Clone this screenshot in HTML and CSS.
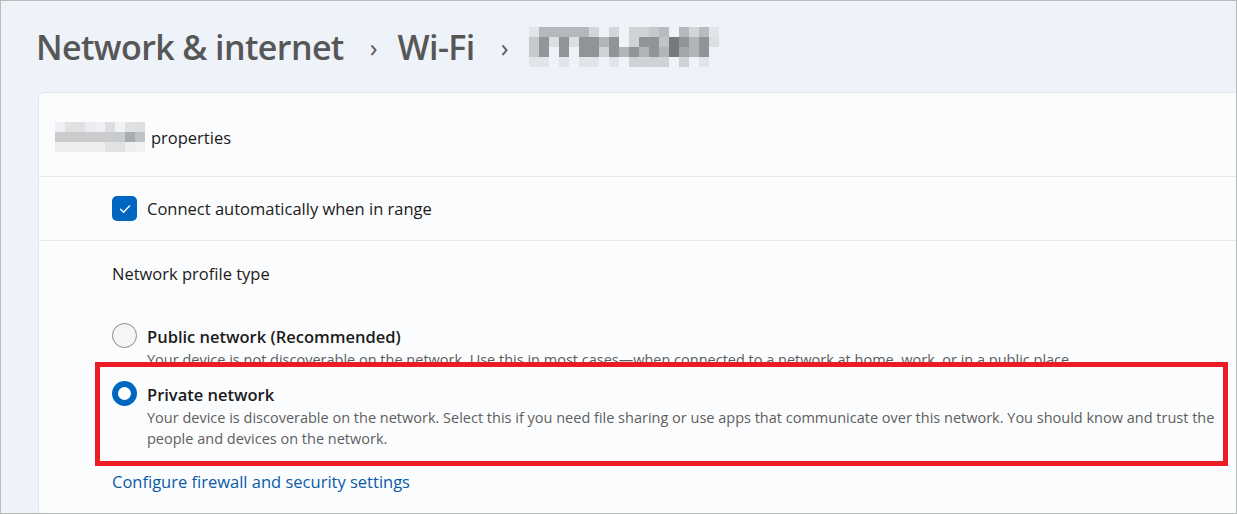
FILE: index.html
```html
<!DOCTYPE html>
<html lang="en">
<head>
    <meta charset="UTF-8">
    <title>Wi-Fi properties</title>
    <link rel="stylesheet" href="styles.css">
</head>
<body>
    <div class="frame">
        <div class="header">
            <span class="crumb">Network &amp; internet</span>
            <span class="chev">&#8250;</span>
            <span class="crumb">Wi-Fi</span>
            <span class="chev">&#8250;</span>
            <svg class="blur-title" width="190" height="40" viewBox="0 0 19 4" shape-rendering="crispEdges">
                <rect x="0" y="0" width="1" height="1" fill="#e1e4e8"/>
                <rect x="1" y="0" width="5" height="1" fill="#b4b8bc"/>
                <rect x="6" y="0" width="1" height="1" fill="#d3d6d9"/>
                <rect x="8" y="0" width="1" height="1" fill="#d3d6d9"/>
                <rect x="10" y="0" width="2" height="1" fill="#d0d3d6"/>
                <rect x="12" y="0" width="1" height="1" fill="#c6c9cc"/>
                <rect x="13" y="0" width="1" height="1" fill="#b8bbbf"/>
                <rect x="15" y="0" width="1" height="1" fill="#b4b8bc"/>
                <rect x="16" y="0" width="1" height="1" fill="#d3d5d8"/>
                <rect x="17" y="0" width="1" height="1" fill="#b8bcc0"/>
                <rect x="18" y="0" width="1" height="1" fill="#e1e4e8"/>
                <rect x="0" y="1" width="1" height="2" fill="#c6c9cc"/>
                <rect x="1" y="1" width="1" height="2" fill="#939699"/>
                <rect x="2" y="1" width="1" height="1" fill="#dcdfe2"/>
                <rect x="3" y="1" width="1" height="2" fill="#919497"/>
                <rect x="4" y="1" width="1" height="1" fill="#dcdfe2"/>
                <rect x="5" y="1" width="2" height="2" fill="#919497"/>
                <rect x="7" y="1" width="1" height="1" fill="#b1b4b8"/>
                <rect x="7" y="2" width="1" height="1" fill="#d0d3d6"/>
                <rect x="8" y="1" width="1" height="2" fill="#919497"/>
                <rect x="9" y="2" width="1" height="1" fill="#b1b4b8"/>
                <rect x="10" y="1" width="1" height="1" fill="#d0d3d6"/>
                <rect x="10" y="2" width="1" height="1" fill="#919497"/>
                <rect x="11" y="1" width="2" height="1" fill="#919497"/>
                <rect x="11" y="2" width="1" height="1" fill="#b1b4b8"/>
                <rect x="12" y="2" width="1" height="1" fill="#919497"/>
                <rect x="13" y="1" width="1" height="1" fill="#c0c3c6"/>
                <rect x="13" y="2" width="1" height="1" fill="#b1b4b8"/>
                <rect x="14" y="1" width="1" height="2" fill="#77797c"/>
                <rect x="15" y="1" width="1" height="1" fill="#919497"/>
                <rect x="15" y="2" width="1" height="1" fill="#a3a6a9"/>
                <rect x="16" y="1" width="1" height="2" fill="#b1b4b8"/>
                <rect x="17" y="1" width="1" height="2" fill="#919497"/>
                <rect x="18" y="1" width="1" height="1" fill="#dcdfe2"/>
                <rect x="0" y="3" width="2" height="1" fill="#e1e4e8"/>
                <rect x="3" y="3" width="1" height="1" fill="#e1e4e8"/>
                <rect x="5" y="3" width="2" height="1" fill="#e1e4e8"/>
                <rect x="8" y="3" width="1" height="1" fill="#e1e4e8"/>
                <rect x="10" y="3" width="4" height="1" fill="#d0d3d6"/>
                <rect x="15" y="3" width="1" height="1" fill="#d0d3d6"/>
                <rect x="17" y="3" width="1" height="1" fill="#e1e4e8"/>
            </svg>
        </div>

        <div class="card">
            <div class="row row-title">
                <svg class="blur-name" width="90" height="30" viewBox="0 0 9 3" shape-rendering="crispEdges">
                    <rect x="0" y="0" width="1" height="1" fill="#eef0f4"/>
                    <rect x="1" y="0" width="2" height="1" fill="#dfe1e3"/>
                    <rect x="3" y="0" width="1" height="1" fill="#eaecee"/>
                    <rect x="4" y="0" width="1" height="1" fill="#eef0f3"/>
                    <rect x="5" y="0" width="1" height="1" fill="#dcdedf"/>
                    <rect x="6" y="0" width="1" height="1" fill="#f0f2f4"/>
                    <rect x="7" y="0" width="1" height="1" fill="#e0e1e2"/>
                    <rect x="8" y="0" width="1" height="1" fill="#dddfe0"/>
                    <rect x="0" y="1" width="7" height="1" fill="#c9cbcd"/>
                    <rect x="7" y="1" width="1" height="1" fill="#a9acaf"/>
                    <rect x="8" y="1" width="1" height="1" fill="#c0c2c4"/>
                    <rect x="0" y="2" width="5" height="1" fill="#eceef0"/>
                    <rect x="5" y="2" width="2" height="1" fill="#e0e2e4"/>
                    <rect x="7" y="2" width="1" height="1" fill="#eceef0"/>
                    <rect x="8" y="2" width="1" height="1" fill="#f0f1f2"/>
                </svg>
                <span>properties</span>
            </div>

            <div class="row row-check">
                <span class="checkbox">
                    <svg width="14" height="14" viewBox="0 0 14 14"><path d="M2.5 7.2 L5.6 10.2 L11.5 4" fill="none" stroke="#fff" stroke-width="1.4" stroke-linecap="round" stroke-linejoin="round"/></svg>
                </span>
                <span>Connect automatically when in range</span>
            </div>

            <div class="section">
                <div class="section-label">Network profile type</div>

                <div class="option public">
                    <span class="radio"></span>
                    <div class="option-text">
                        <div class="option-title">Public network (Recommended)</div>
                        <div class="option-desc">Your device is not discoverable on the network. Use this in most cases—when connected to a network at home, work, or in a public place.</div>
                    </div>
                </div>

                <div class="highlight">
                    <div class="option">
                        <span class="radio checked"></span>
                        <div class="option-text">
                            <div class="option-title">Private network</div>
                            <div class="option-desc">
                                <span class="line">Your device is discoverable on the network. Select this if you need file sharing or use apps that communicate over this network. You should know and trust the</span>
                                <span class="line">people and devices on the network.</span>
                            </div>
                        </div>
                    </div>
                </div>

                <a class="link" href="#">Configure firewall and security settings</a>
            </div>
        </div>
    </div>
</body>
</html>
```

FILE: styles.css
```css
html, body {
    margin: 0;
    padding: 0;
}
body {
    font-family: "Open Sans", "Noto Sans", sans-serif;
    color: #1b1b1b;
}
.frame {
    width: 1237px;
    height: 514px;
    box-sizing: border-box;
    border: 1px solid #b6bcb8;
    background-color: #eef3f9;
    overflow: hidden;
}
.header {
    display: flex;
    align-items: center;
    height: 40px;
    margin-top: 26px;
    padding-left: 35px;
    color: #575757;
}
.crumb {
    font-size: 34px;
    font-weight: 600;
    letter-spacing: -0.6px;
}
.chev {
    font-size: 26px;
    margin: 0 20px 0 26px;
}
.blur-title {
    display: block;
    margin-left: 0;
}
.card {
    margin: 25px -10px 0 37px;
    background-color: #fbfcfd;
    border: 1px solid #e3e6e9;
    border-radius: 6px;
}
.row {
    display: flex;
    align-items: center;
    border-bottom: 1px solid #e6e8ea;
}
.row-title {
    box-sizing: border-box;
    height: 84px;
    padding: 5px 0 0 16px;
    font-size: 16.5px;
}
.blur-name {
    display: block;
    margin-right: 6px;
}
.row-check {
    height: 63px;
    padding-left: 73px;
    font-size: 16.5px;
}
.checkbox {
    display: flex;
    align-items: center;
    justify-content: center;
    width: 25px;
    height: 25px;
    border-radius: 5px;
    background-color: #0067c0;
    margin-right: 10px;
}
.section {
    padding: 21px 0 20px 73px;
}
.section-label {
    font-size: 16.5px;
    line-height: 24px;
    height: 24px;
    margin-bottom: 39px;
}
.option {
    display: flex;
    align-items: flex-start;
}
.radio {
    flex: none;
    box-sizing: border-box;
    width: 25px;
    height: 25px;
    border-radius: 50%;
    border: 1px solid #8a8a8a;
    background-color: #f4f5f6;
    margin: -2px 10px 0 0;
}
.radio.checked {
    border: 6.5px solid #0067c0;
    background-color: #fff;
}
.option-title {
    font-size: 16.5px;
    font-weight: 600;
    line-height: 24px;
}
.option-desc {
    font-size: 14.5px;
    line-height: 21px;
    color: #5e5e5e;
}
.line {
    display: block;
    white-space: nowrap;
}
.public {
    height: 45px;
}
.highlight {
    position: relative;
    box-sizing: border-box;
    width: 1133px;
    margin: -8px 0 0 -17px;
    padding: 16px 0 12px 12px;
    border: 5px solid #ec1c24;
    background-color: #fbfcfd;
}
.link {
    display: block;
    margin-top: 4px;
    font-size: 16.5px;
    line-height: 24px;
    color: #0a5aa8;
    text-decoration: none;
}
```
